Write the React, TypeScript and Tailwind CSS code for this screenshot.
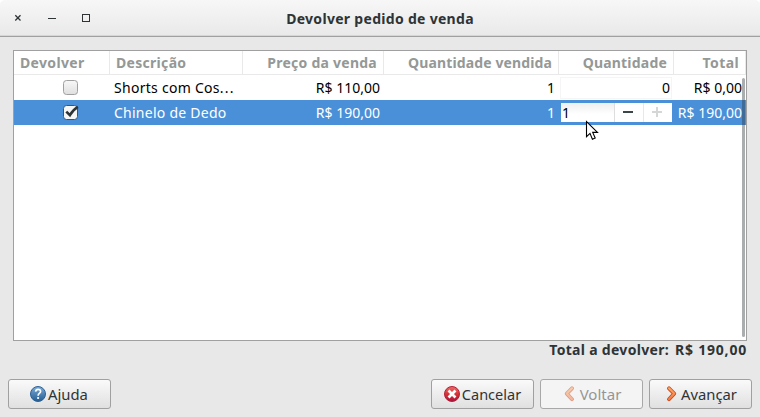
import type { ReactNode } from "react";

const columns = [
  { label: "Devolver", className: "w-24 justify-start pl-[6px] tracking-[0.35px]" },
  { label: "Descrição", className: "w-[133px] justify-start pl-[6px] tracking-[0.3px]" },
  { label: "Preço da venda", className: "w-[141px] justify-end pr-[6px] tracking-[0.25px]" },
  { label: "Quantidade vendida", className: "w-[175px] justify-end pr-[6px] tracking-[0.12px]" },
  { label: "Quantidade", className: "w-[115px] justify-end pr-[6px] tracking-[0.2px]" },
  { label: "Total", className: "w-[72px] justify-end pr-[6px] tracking-[0.4px]" },
];

const CloseIcon = () => (
  <svg className="h-[8px] w-[8px]" viewBox="0 0 8 8" fill="none" stroke="#2e3436" strokeWidth="1.3">
    <path d="M1.3 1.3l5.2 5.2M6.5 1.3L1.3 6.5" />
  </svg>
);

const CheckBox = ({ checked = false }: { checked?: boolean }) => (
  <svg className="h-[18px] w-[18px]" viewBox="0 0 18 18" fill="none">
    <defs>
      <linearGradient id="box" x1="0" y1="0" x2="0" y2="1">
        <stop offset="0" stopColor="#f8f8f8" />
        <stop offset="1" stopColor="#dfdfdf" />
      </linearGradient>
    </defs>
    <rect x="1.5" y="1.5" width="14" height="14" rx="3" fill={checked ? "#f6f6f6" : "url(#box)"} stroke={checked ? "#265a8c" : "#a0a0a0"} />
    {checked && <path d="M4.3 7.6l3.6 3.6c1.9-3.4 4.3-6.3 8-8.4" stroke="#2e3436" strokeWidth="2.6" />}
  </svg>
);

const HelpIcon = () => (
  <svg className="h-4 w-4" viewBox="0 0 16 16">
    <defs>
      <linearGradient id="help" x1="0" y1="0" x2="0" y2="1">
        <stop offset="0" stopColor="#7fadd8" />
        <stop offset="1" stopColor="#225c92" />
      </linearGradient>
    </defs>
    <circle cx="8" cy="8" r="7.5" fill="url(#help)" stroke="#2d6295" />
    <path d="M5.6 5.6C5.8 4.1 6.8 3.4 8 3.4c1.5 0 2.6.9 2.6 2.2 0 1.9-2.5 1.9-2.5 4.1" fill="none" stroke="#fff" strokeWidth="1.6" />
    <circle cx="8.1" cy="12" r="1.1" fill="#fff" />
  </svg>
);

const CancelIcon = () => (
  <svg className="h-4 w-4" viewBox="0 0 16 16">
    <defs>
      <linearGradient id="cancel" x1="0" y1="0" x2="0" y2="1">
        <stop offset="0" stopColor="#ee6b68" />
        <stop offset="0.55" stopColor="#d32f35" />
        <stop offset="1" stopColor="#a81040" />
      </linearGradient>
    </defs>
    <circle cx="8" cy="8" r="7.5" fill="url(#cancel)" stroke="#b32238" />
    <path d="M5.5 5.5l5 5M10.5 5.5l-5 5" stroke="#fff" strokeWidth="2.7" strokeLinecap="square" />
  </svg>
);

const ArrowIcon = ({ back = false }: { back?: boolean }) => (
  <svg className={`h-4 w-4 ${back ? "-scale-x-100 opacity-50" : ""}`} viewBox="0 0 16 16" fill="none" strokeLinecap="round" strokeLinejoin="round">
    <defs>
      <linearGradient id="arrow" x1="0" y1="0" x2="0" y2="16" gradientUnits="userSpaceOnUse">
        <stop offset="0" stopColor="#fcaf6e" />
        <stop offset="1" stopColor="#f0703f" />
      </linearGradient>
    </defs>
    <path d="M5 2.3L10.2 7.6 5 13.2" stroke="#c94a1e" strokeWidth="3.8" />
    <path d="M5 2.3L10.2 7.6 5 13.2" stroke="url(#arrow)" strokeWidth="2.2" />
  </svg>
);

const Button = ({ className = "", disabled = false, children }: { className?: string; disabled?: boolean; children: ReactNode }) => (
  <button
    disabled={disabled}
    className={`flex h-[30px] w-[103px] items-center justify-center rounded-[3px] border pb-px ${
      disabled ? "border-[#a8a8a8] bg-[#f4f4f4] text-[#949696]" : "border-[#a0a0a0] bg-linear-to-b from-[#fafafa] to-[#e0e0e0] text-[#2e3436]"
    } ${className}`}
  >
    {children}
  </button>
);

const App = () => {
  return (
    <div className="flex h-[417px] w-[760px] flex-col overflow-hidden bg-[#e8e8e8] font-['Noto_Sans',sans-serif] text-[14px] leading-[20px] whitespace-nowrap text-[#2e3436]">
      <div className="shrink-0 bg-white">
        <header className="grid h-[37px] grid-cols-[1fr_auto_1fr] items-center rounded-t-[5px] border-b border-[#a0a0a0] bg-linear-to-b from-[#f7f7f7] to-[#e9e9e9] shadow-[inset_0_-1px_0_#d6d6d6]">
          <div className="flex items-center pl-[14px]">
            <CloseIcon />
            <span className="ml-[26px] h-px w-2 bg-[#2e3436]" />
            <span className="ml-[26px] h-2 w-2 border border-[#2e3436]" />
          </div>
          <h1 className="pt-px font-bold tracking-[0.3px]">Devolver pedido de venda</h1>
          <div />
        </header>
      </div>

      <main className="mx-[13px] mt-[13px] h-[291px] w-[734px] shrink-0 border border-[#a0a0a0] bg-white">
        <div className="relative h-full">
          <div className="flex h-6 font-bold text-[#949896]">
            {columns.map((col) => (
              <div key={col.label} className={`flex items-center border-r border-b border-[#e9e9e9] ${col.className}`}>
                {col.label}
              </div>
            ))}
          </div>

          <div className="flex h-[25px] items-center text-black">
            <div className="flex w-24 justify-center pl-[17px]"><CheckBox /></div>
            <div className="w-[133px] pl-1 tracking-[0.28px]">Shorts com Cos<span className="tracking-[1.2px]">...</span></div>
            <div className="w-[141px] pr-[4px] text-right">R$ 110,00</div>
            <div className="w-[175px] pr-[4px] text-right">1</div>
            <div className="w-[115px] pr-[2px] pl-[1px]">
              <div className="flex h-[22px] items-center justify-end border border-[#f5f5f5] pr-px">0</div>
            </div>
            <div className="w-[72px] pr-[4px] text-right">R$ 0,00</div>
          </div>

          <div className="flex h-[25px] items-center bg-[#4a90d9] text-white">
            <div className="flex w-24 justify-center pl-[17px]"><CheckBox checked /></div>
            <div className="w-[133px] pl-1 tracking-[0.25px]">Chinelo de Dedo</div>
            <div className="w-[141px] pr-[4px] text-right">R$ 190,00</div>
            <div className="w-[175px] pr-[4px] text-right">1</div>
            <div className="w-[115px] pr-[2px] pl-[2px]">
              <div className="flex h-[19px] bg-white text-black">
                <div className="flex w-[54px] items-center border-r border-[#dedede] bg-linear-to-b from-[#eeeeee] to-white to-60% pl-px">1</div>
                <div className="flex w-[29px] items-center justify-center border-r border-[#e8e8e8] pr-[2px] pb-px">
                  <span className="h-[2px] w-[10px] bg-[#3b4649]" />
                </div>
                <div className="flex w-[28px] items-center justify-center pr-[2px] pb-px">
                  <svg className="h-[10px] w-[10px]" viewBox="0 0 10 10" fill="#d5d7d7">
                    <path d="M4 0h2v4h4v2H6v4H4V6H0V4h4z" />
                  </svg>
                </div>
              </div>
            </div>
            <div className="w-[72px] pr-[4px] text-right">R$ 190,00</div>
          </div>

          <div className="absolute top-[27px] right-px h-[259px] w-[3px] rounded-full bg-[#2e3436]/40" />
          <svg className="absolute top-[69px] left-[571px] h-[22px] w-[14px]" viewBox="0 0 14 22">
            <path d="M1.5 1.5v15.2l3.5-3.3 2.4 5.8 2.8-1.2-2.5-5.6h4.8z" fill="#fff" stroke="#000" strokeWidth="1.1" />
          </svg>
        </div>
      </main>

      <div className="flex h-[18px] shrink-0 items-center justify-end gap-[6px] pr-[13px] font-bold">
        <span className="tracking-[0.3px]">Total a devolver:</span>
        <span className="tracking-[0.8px]">R$ 190,00</span>
      </div>

      <footer className="mt-5 flex gap-[6px] px-2">
        <Button className="mr-auto gap-[2px] pr-px text-[14.8px]">
          <HelpIcon />
          Ajuda
        </Button>
        <Button className="gap-[2px] text-[14.5px]">
          <CancelIcon />
          Cancelar
        </Button>
        <Button disabled className="gap-[3px] pr-px text-[15px]">
          <ArrowIcon back />
          Voltar
        </Button>
        <Button className="gap-[1px] text-[14.8px]">
          <ArrowIcon />
          Avançar
        </Button>
      </footer>
    </div>
  );
};

export default App;
